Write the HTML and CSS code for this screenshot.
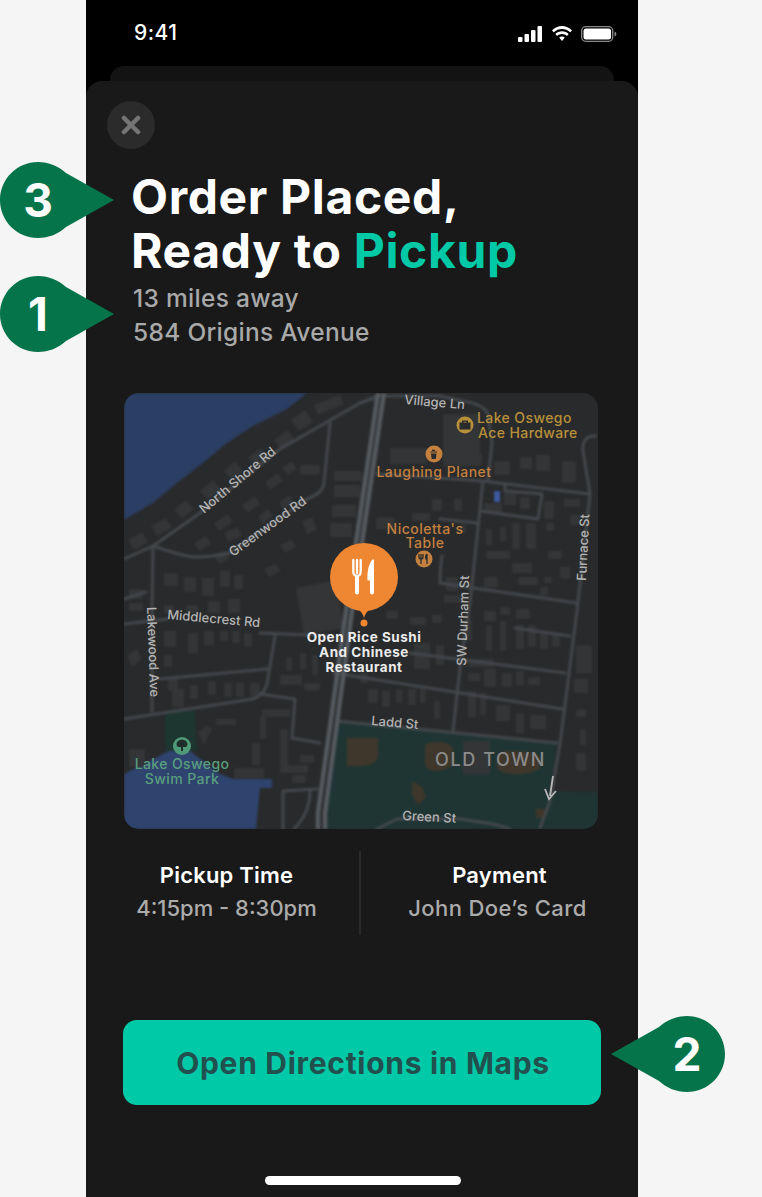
FILE: index.html
```html
<!DOCTYPE html>
<html>
  <head>
    <meta charset="utf-8">
    <title>Order Placed</title>
    <link rel="stylesheet" href="styles.css">
  </head>
  <body>
    <div class="phone">
      <div class="status">
        <span class="time">9:41</span>
        <div class="status-icons">
          <svg width="25" height="16" viewBox="0 0 25 16"><rect x="0" y="11" width="4.500" height="5" rx="1"/><rect x="6.500" y="8" width="4.500" height="8" rx="1"/><rect x="13" y="4" width="4.500" height="12" rx="1"/><rect x="19.500" y="0" width="4.500" height="16" rx="1"/></svg>
          <svg width="22" height="16" viewBox="0 0 22 16"><path d="M11 3C14.200 3 17 4.200 19.200 6.300L21 4.400C18.300 1.700 14.800 0 11 0S3.700 1.700 1 4.400L2.800 6.300C5 4.200 7.800 3 11 3Z"/><path d="M11 8C12.900 8 14.600 8.700 15.900 9.900L17.700 8C15.900 6.300 13.600 5.300 11 5.300S6.100 6.300 4.300 8L6.100 9.900C7.400 8.700 9.100 8 11 8Z"/><path d="M11 10.500C9.900 10.500 8.900 10.900 8.200 11.600L11 15L13.800 11.600C13.100 10.900 12.100 10.500 11 10.500Z"/></svg>
          <svg width="36" height="16" viewBox="0 0 36 16"><rect x="0.700" y="0.700" width="31" height="14.600" rx="4" fill="none" stroke="#8a8a8a" stroke-width="1.300"/><rect x="2.500" y="2.500" width="27.500" height="11" rx="2.500"/><path d="M33.500 5.500C34.700 6 35.400 7 35.400 8S34.700 10 33.500 10.500Z" fill="#8a8a8a"/></svg>
        </div>
      </div>

      <div class="back-card"></div>

      <div class="sheet">
        <div class="close">
          <svg width="20" height="20" viewBox="0 0 20 20"><path d="M3 3L17 17M17 3L3 17"/></svg>
        </div>

        <h1 class="title">Order Placed,<br>Ready to <span class="accent">Pickup</span></h1>
        <p class="address">13 miles away<br>584 Origins Avenue</p>

        <div class="map">
          <svg width="474" height="436" viewBox="0 0 474 436">
            <g class="base">
              <!-- water and parks -->
              <path class="water" d="M0 0H183L163 16L129 33L103 50L79 70L53 90L29 110L0 127Z"/>
              <path class="water2" d="M0 381L39 361L49 356L66 358L96 381L109 386H148V395H136L132 436H0Z"/>
              <path class="wood" d="M41 318H71L73 358H41Z"/>
              <path class="park" d="M213 328L433 351L426 398L474 399V436H199Z"/>
              <path class="mud" d="M223 345H254V365Q250 373 236 373H223ZM301 352Q303 349 315 349T329 356V372Q320 379 310 378T301 366ZM373 362Q378 357 395 358T416 364V375Q405 382 390 381T373 375Z"/>
              <path class="block" d="M339 348H366V381H339Z"/>
              <path class="mud" d="M412 416h9v9h-9zM288 388l10 6l4 10l-8 8l-6-10z"/>

              <!-- buildings -->
              <path class="block" d="M4 147l14-8l6 10l-14 8zM27 133l15-8l6 10l-15 8zM50 117l12-10l8 9l-12 10zM76 98l13-11l8 10l-13 10zM100 78l11-10l8 10l-11 9zM124 64l13-9l7 11l-13 8zM150 47l14-10l7 10l-14 10zM167 27l14-10l8 12l-14 9zM190 12l26-10l4 9l-26 11z"/>
              <path class="block" d="M70 150l12-7l5 8l-12 7zM90 130l14-9l5 8l-14 9zM118 112l13-9l5 8l-13 9zM141 89l13-9l5 8l-13 9zM158 74l10-6l5 8l-10 6zM176 72h20v10h-20zM100 140l14-6l4 9l-14 6zM134 124l10-8l5 7l-10 8zM155 110l10-8l5 7l-10 8zM178 128l10-4l5 13l-10 4zM156 152l11-6l5 8l-11 6zM140 176l12-6l5 8l-12 6zM90 163l10-5l5 8l-10 5z"/>
              <path class="block" d="M40 180h14v13h-14zM60 184h12v15h-12zM78 185h12v18h-12zM96 178h10v16h-10zM110 182h9v14h-9zM5 196h14v10h-14zM5 210h14v8h-14zM40 212h10v8h-10zM62 212h12v8h-12zM84 208h12v12h-12zM104 206h12v14h-12zM210 78h28v10h-28zM210 92h26v12h-26zM208 112h24v12h-24zM206 130h22v14h-22zM172 195l40-8l8 48l-40 7z"/>
              <path class="block" d="M3 262l10-6l5 10l-10 8zM40 238h12v16h-12zM64 240h10v20h-10zM80 238h10v14h-10zM96 238h8v10h-8zM108 238h8v12h-8zM120 240h8v14h-8zM40 262h8v12h-8zM44 284h10v14h-10zM48 296h12v18h-12zM66 292h8v14h-8zM84 288h8v14h-8zM100 290h8v14h-8zM112 290h8v14h-8zM126 290h10v14h-10zM162 264h6v14h-6zM176 260h6v16h-6zM188 262h6v20h-6zM156 282h22v10h-22zM180 290h16v8h-16zM5 356h16v18h-16zM74 340l8-8l6 4l-8 16zM92 326h20v6h-20zM128 350h8v22h-8zM110 375h30v10h-30zM136 322h6v24h-6zM138 316h28v8h-28zM156 336h8v36h-8zM168 382h14v8h-14zM156 372h28v8h-28zM176 362h14v8h-14z"/>
              <path class="block" d="M266 55h37v16h-37zM319 21h37v52h-37zM340 60h18v12h-18zM370 68h16v14h-16zM396 64h12v12h-12zM412 62h14v16h-14zM438 68h14v22h-14zM308 106h10v12h-10zM330 106h8v12h-8zM360 110h18v10h-18zM380 100h12v12h-12zM396 104h10v12h-10zM420 108h10v18h-10zM440 106h16v8h-16zM446 122h10v10h-10zM252 124h18v12h-18zM288 120h18v8h-18zM336 132h6v8h-6zM362 136h6v16h-6zM376 134h6v14h-6zM388 130h8v26h-8zM402 130h10v26h-10zM422 130h8v8h-8zM362 158h24v8h-24zM424 158h14v8h-14zM388 170h20v10h-20zM360 184h14v10h-14zM394 184h20v8h-20zM420 184h8v6h-8zM436 174h10v12h-10zM416 194h8v8h-8zM322 184h12v14h-12zM320 202h22v8h-22zM360 218h12v10h-12zM376 214h10v8h-10zM392 216h14v10h-14z"/>
              <path class="block" d="M286 224h16v8h-16zM308 222h10v8h-10zM262 218h12v8h-12zM340 226h8v22h-8zM362 232h6v26h-6zM376 228h6v30h-6zM392 232h8v24h-8zM404 232h8v22h-8zM416 240h8v16h-8zM428 242h8v12h-8zM290 250h16v26h-16zM312 252h8v20h-8zM344 266h26v8h-26zM344 280h12v8h-12zM360 276h12v18h-12zM378 280h10v14h-10zM392 278h8v14h-8zM404 284h12v8h-12zM236 280h8v10h-8zM244 296h10v14h-10zM258 298h8v16h-8zM272 296h6v14h-6zM284 296h8v16h-8zM296 296h6v14h-6zM344 298h8v26h-8zM356 300h6v22h-6zM372 312h14v16h-14zM392 320h8v20h-8zM406 322h16v14h-16zM452 252h16v28h-16zM450 286h14v14h-14zM452 316h10v8h-10zM456 336h6v16h-6zM452 360h10v18h-10zM310 308h6v18h-6z"/>

              <!-- roads -->
              <g class="road">
                <path d="M0 166L29 153L76 120L156 56L236 10L256 2"/>
                <path d="M29 153Q50 160 63 163T106 160L183 106Q199 100 200 90L206 30"/>
                <path d="M29 153L28 218L28 318"/>
                <path d="M0 206L22 199"/>
                <path d="M236 10L256 3H315L339 8Q362 12 364 22L368 50L364 86"/>
                <path d="M253 81L359 88L466 101"/>
                <path d="M359 88L346 210L336 275L329 338"/>
                <path d="M381 93V98L418 101L414 126L356 118"/>
                <path d="M316 126L353 130"/>
                <path d="M318 163Q316 175 316 190L453 210"/>
                <path d="M472 43Q458 42 459 58L466 101L453 218L436 351L426 408L416 435"/>
                <path d="M391 235L446 243"/>
                <path d="M286 260L441 280"/>
                <path d="M210 280L438 316"/>
                <path d="M213 328L433 350"/>
                <path d="M253 436L273 426H336L369 431L386 436"/>
                <path d="M0 231L43 226M136 240L209 243"/>
                <path d="M151 243L143 291Q140 302 129 306L0 326"/>
                <path d="M36 286L143 276"/>
                <path d="M136 301L171 306L168 345L196 350"/>
                <path d="M159 436V398L193 396"/>
                <path d="M170 436Q186 420 186 398"/>
              </g>
              <g class="highway">
                <path d="M254 0L222 218L194 420V436"/>
                <path d="M260 0L228 218L201 420V436"/>
              </g>
              <!-- blue dot -->
              <rect class="transit" x="370" y="98" width="6" height="11" rx="1"/>
            </g>

            <!-- arrow on Furnace St -->
            <path class="arrow" d="M429 383L426 403M421 396L425 406L432 398"/>

            <!-- green tree poi -->
            <circle class="poi-green" cx="58" cy="353" r="9"/>
            <path class="tree" d="M58 346.500a5.500 4.500 0 0 1 4 7.500h-3v4h-2v-4h-3a5.500 4.500 0 0 1 4-7.500z"/>

            <!-- hardware poi -->
            <circle class="poi-yellow" cx="341" cy="32" r="8.500"/>
            <path class="icon-dark" d="M335.500 29.500h11v7h-11zM338 29.500v-2h6v2h-1.400v-.8h-3.200v.8z"/>
            <!-- restaurant pois -->
            <circle class="poi-orange" cx="310" cy="61" r="8.500"/>
            <path class="icon-dark" d="M306.500 58.500h6.500v1h-6.500zM307 60.500h5.500l-.6 5.500h-4.300zM308 56.500l3 .4v1h-3z"/>
            <circle class="poi-orange" cx="300" cy="166" r="8.500"/>
            <path class="cutlery-sm" d="M297 161v10M295 161v3q0 2 2 2t2-2v-3M303 161v10M303 161q-2 2-1 5h1"/>

            <!-- main pin -->
            <circle class="pin" cx="240" cy="184" r="34"/>
            <path class="pin" d="M233 216Q238 218 240 225Q242 218 247 216Z"/>
            <circle class="pin" cx="240" cy="230" r="3.500"/>
            <path class="fork" d="M229.300 167v11q0 5 3.700 5t3.700-5v-11M233 167v13"/>
            <path class="knife" d="M231 182h4v17.500a2 2 0 0 1-4 0Z"/>
            <path class="knife" d="M250 167.500V199.500a2 2 0 0 1-4 0V187.500H243.500C243 178 245 170 248.500 166.500C249.200 165.900 250 166.500 250 167.500Z"/>

            <!-- labels -->
            <text class="lbl-road" transform="translate(280 11) rotate(5)">Village Ln</text>
            <text class="lbl-road" transform="translate(80 121) rotate(-40)">North Shore Rd</text>
            <text class="lbl-road" transform="translate(109 164) rotate(-36)">Greenwood Rd</text>
            <text class="lbl-road" transform="translate(23 214) rotate(88)">Lakewood Ave</text>
            <text class="lbl-road" transform="translate(43 226) rotate(5)">Middlecrest Rd</text>
            <text class="lbl-road" transform="translate(342 273) rotate(-88)">SW Durham St</text>
            <text class="lbl-road" transform="translate(462 188) rotate(-87)">Furnace St</text>
            <text class="lbl-road" transform="translate(247 332) rotate(5)">Ladd St</text>
            <text class="lbl-road" transform="translate(278 427) rotate(3)">Green St</text>
            <text class="lbl-town" x="311" y="373">OLD TOWN</text>

            <text class="lbl-yellow" x="353" y="30">Lake Oswego</text>
            <text class="lbl-yellow" x="354" y="45">Ace Hardware</text>
            <text class="lbl-orange" x="310" y="84" text-anchor="middle">Laughing Planet</text>
            <text class="lbl-orange" x="301" y="141" text-anchor="middle">Nicoletta's</text>
            <text class="lbl-orange" x="301" y="155" text-anchor="middle">Table</text>
            <text class="lbl-green" x="58" y="376" text-anchor="middle">Lake Oswego</text>
            <text class="lbl-green" x="58" y="391" text-anchor="middle">Swim Park</text>
            <text class="lbl-place" x="240" y="249" text-anchor="middle">Open Rice Sushi</text>
            <text class="lbl-place" x="240" y="264" text-anchor="middle">And Chinese</text>
            <text class="lbl-place" x="240" y="279" text-anchor="middle">Restaurant</text>
          </svg>
        </div>

        <div class="details">
          <div class="detail">
            <div class="detail-head">Pickup Time</div>
            <div class="detail-value">4:15pm - 8:30pm</div>
          </div>
          <div class="detail-line"></div>
          <div class="detail">
            <div class="detail-head">Payment</div>
            <div class="detail-value value-card">John Doe’s Card</div>
          </div>
        </div>

        <div class="button">Open Directions in Maps</div>
        <div class="home"></div>
      </div>
    </div>

    <!-- numbered markers over the screen -->
    <div class="marker marker-3">
      <svg width="116" height="76" viewBox="0 0 116 76"><path d="M38 0C49 0 58 4 66 11L114 38L66 65C58 72 49 76 38 76C17 76 0 59 0 38S17 0 38 0Z"/></svg>
      <span class="marker-num">3</span>
    </div>
    <div class="marker marker-1">
      <svg width="116" height="76" viewBox="0 0 116 76"><path d="M38 0C49 0 58 4 66 11L114 38L66 65C58 72 49 76 38 76C17 76 0 59 0 38S17 0 38 0Z"/></svg>
      <span class="marker-num">1</span>
    </div>
    <div class="marker marker-2">
      <svg width="116" height="76" viewBox="0 0 116 76"><path d="M78 0C67 0 58 4 50 11L2 38L50 65C58 72 67 76 78 76C99 76 116 59 116 38S99 0 78 0Z"/></svg>
      <span class="marker-num">2</span>
    </div>
  </body>
</html>
```

FILE: styles.css
```css
body {margin:0; background:#f5f5f5; font-family:"Inter", "Liberation Sans", sans-serif; overflow:hidden;}

.phone {width:552px; height:1197px; margin-left:86px; background:#000; overflow:hidden; position:relative;}

.status {height:66px; box-sizing:border-box; padding:20px 21px 0 48px; display:flex; justify-content:space-between; align-items:flex-start; color:#fff;}
.time {font-size:21px; line-height:26px; font-weight:500; letter-spacing:0.5px;}
.status-icons {display:flex; gap:8px; padding-top:6px; fill:#fff;}

.back-card {height:15px; margin:0 24px; background:#131313; border-radius:14px 14px 0 0;}

.sheet {height:1116px; background:#191919; border-radius:16px 16px 0 0; padding:20px 0 0; box-sizing:border-box;}

.close {width:48px; height:48px; margin-left:21px; border-radius:50%; background:#2b2b2b; display:flex; align-items:center; justify-content:center;}
.close svg {fill:none; stroke:#757575; stroke-width:4.500; stroke-linecap:round;}

.title {margin:21px 0 0 45px; font-size:48px; line-height:54px; font-weight:700; color:#fff; letter-spacing:0.65px;}
.accent {color:#00c9a7;}

.address {margin:3px 0 0 47px; font-size:24.500px; line-height:34px; font-weight:500; color:#a9a9a9; letter-spacing:0.3px;}

.map {width:474px; height:436px; margin:44px 0 0 38px; background:#292a2b; border-radius:15px; overflow:hidden;}
.map svg {display:block;}

.base {filter:blur(0.8px);}
.water {fill:#2b3e63;}
.water2 {fill:#2e446e;}
.wood {fill:#1d3630;}
.park {fill:#1f3533;}
.mud {fill:#3f372b;}
.block {fill:#343537;}
.road {fill:none; stroke:#43474b; stroke-width:3; stroke-linejoin:round; stroke-linecap:round;}
.highway {fill:none; stroke:#555a5f; stroke-width:4.500;}
.arrow {fill:none; stroke:#b8b8b8; stroke-width:1.800;}
.poi-green {fill:#4f9a78;}
.poi-yellow {fill:#b8903a;}
.poi-orange {fill:#c4803f;}
.tree {fill:#1e2e2a;}
.icon-dark {fill:#2a2b2c;}
.cutlery-sm {fill:none; stroke:#2a2b2c; stroke-width:1.300;}
.transit {fill:#3c5aa0;}
.pin {fill:#ef8632;}
.fork {fill:none; stroke:#fff; stroke-width:2.300; stroke-linecap:round;}
.knife {fill:#fff;}

.lbl-road {font-size:13px; font-weight:500; fill:#b4b4b4;}
.lbl-town {font-size:18px; font-weight:500; letter-spacing:1.600px; fill:#8b8b8b;}
.lbl-yellow {font-size:14px; font-weight:500; letter-spacing:0.400px; fill:#b8903a;}
.lbl-orange {font-size:14px; font-weight:500; letter-spacing:0.500px; fill:#c4803f;}
.lbl-green {font-size:14px; font-weight:500; letter-spacing:0.400px; fill:#5a9e7e;}
.lbl-place {font-size:13.500px; font-weight:700; letter-spacing:0.500px; fill:#ececec;}

.details {display:grid; grid-template-columns:265px 2px 277px; align-items:center; height:84px; margin:22px 0 0 8px; text-align:center;}
.detail {padding-bottom:3px;}
.detail-line {height:84px; background:#2a2a2a;}
.detail-head {font-size:22px; line-height:33px; font-weight:600; letter-spacing:0.2px; color:#fff;}
.detail-value {font-size:22px; line-height:33px; font-weight:500; color:#ababab;}
.value-card {letter-spacing:0.4px; padding-right:4px;}

.button {width:478px; height:85px; margin:85px 0 0 37px; padding-left:2px; box-sizing:border-box; border-radius:14px; background:#00c9a7; color:#21504f; font-size:30px; font-weight:700; letter-spacing:0.7px; display:flex; align-items:center; justify-content:center;}

.home {width:196px; height:9px; margin:71px 0 0 179px; background:#fff; border-radius:5px;}

.marker {position:absolute; width:116px; height:76px; fill:#06744a;}
.marker svg {display:block;}
.marker-3 {left:0; top:162px;}
.marker-1 {left:0; top:276px;}
.marker-2 {left:609px; top:1016px;}
.marker-num {position:absolute; top:0; left:0; width:76px; height:76px; color:#fff; font-size:46px; font-weight:700; line-height:76px; text-align:center;}
.marker-2 .marker-num {left:40px;}
```
